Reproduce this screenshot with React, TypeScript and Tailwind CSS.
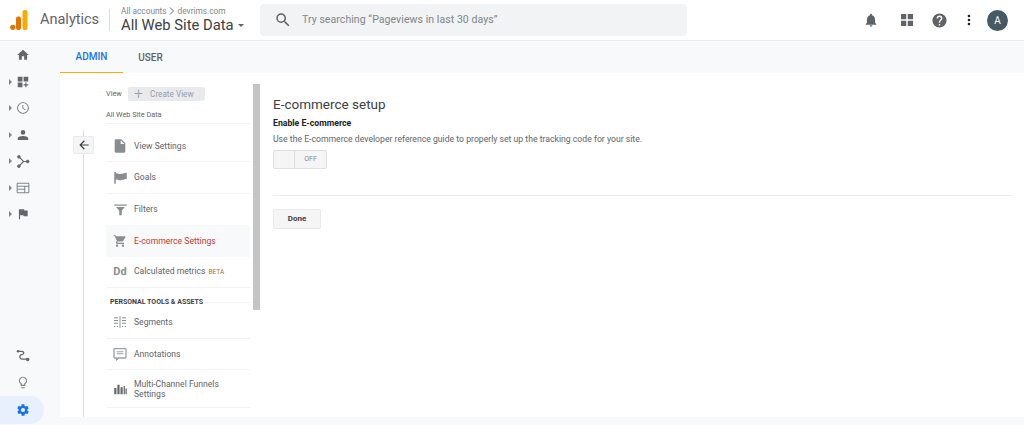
import React from 'react';

// Material icon helper, all icons are on a 24 grid
const Icon = ({ d, size = 16, className = '' }: { d: string; size?: number; className?: string }) => (
  <svg width={size} height={size} viewBox="0 0 24 24" className={className} fill="currentColor">
    <path d={d} />
  </svg>
);

const paths = {
  home: 'M10 20v-6h4v6h5v-8h3L12 3 2 12h3v8z',
  dash: 'M3 3h8v8H3zM13 3h8v8h-8zM3 13h8v8H3zM16 13h2v3h3v2h-3v3h-2v-3h-3v-2h3z',
  clock: 'M12 2a10 10 0 1 0 0 20 10 10 0 0 0 0-20zm0 18.500a8.500 8.500 0 1 1 0-17 8.500 8.500 0 0 1 0 17zM12.500 7H11.200v6l5 3 .6-1-4.300-2.600z',
  person: 'M12 11.500a4 4 0 1 0 0-8 4 4 0 0 0 0 8zm0 2c-3 0-9 1.300-9 4v3h18v-3c0-2.700-6-4-9-4z',
  flag: 'M14.400 6L14 4H5v17h2v-7h5.600l.4 2h7V6z',
  bulb: 'M9 21c0 .6.400 1 1 1h4c.6 0 1-.4 1-1v-1H9zm3-19a7 7 0 0 0-4 12.700V17c0 .6.400 1 1 1h6c.6 0 1-.4 1-1v-2.300A7 7 0 0 0 12 2zm2.900 11.100l-.9.600V16h-4v-2.300l-.9-.6a5 5 0 1 1 5.800 0z',
  gear: 'M19.400 13c0-.3.100-.6.100-1s0-.7-.1-1l2.100-1.600c.2-.2.200-.4.100-.6l-2-3.500c-.1-.2-.4-.3-.6-.2l-2.500 1c-.5-.4-1.100-.7-1.700-1l-.4-2.600c0-.3-.2-.5-.4-.5h-4c-.3 0-.5.200-.5.400l-.4 2.700c-.6.200-1.100.6-1.700 1l-2.400-1c-.3-.1-.5 0-.7.200l-2 3.500c-.1.200 0 .4.200.6L4.600 11c0 .3-.1.600-.1 1s0 .7.100 1l-2.100 1.600c-.2.200-.2.400-.1.600l2 3.500c.1.200.4.300.6.200l2.500-1c.5.400 1.100.7 1.700 1l.4 2.600c0 .2.200.4.500.4h4c.3 0 .5-.2.500-.4l.4-2.600c.6-.3 1.200-.6 1.700-1l2.500 1c.2.100.5 0 .6-.2l2-3.500c.1-.2.100-.5-.1-.6zM12 15.500a3.500 3.500 0 1 1 0-7 3.500 3.500 0 0 1 0 7z',
  search: 'M15.500 14h-.79l-.28-.27A6.470 6.470 0 0 0 16 9.500 6.500 6.500 0 1 0 9.500 16c1.610 0 3.090-.59 4.230-1.570l.27.280v.79l5 4.990L20.490 19l-4.990-5zm-6 0C7.010 14 5 11.990 5 9.500S7.010 5 9.500 5 14 7.010 14 9.500 11.990 14 9.500 14z',
  bell: 'M12 22a2 2 0 0 0 2-2h-4a2 2 0 0 0 2 2zm6-6v-5c0-3.100-1.600-5.600-4.500-6.300V4a1.500 1.500 0 0 0-3 0v.7C7.600 5.400 6 7.900 6 11v5l-2 2v1h16v-1z',
  apps: 'M4 4h7v7H4zM13 4h7v7h-7zM4 13h7v7H4zM13 13h7v7h-7z',
  help: 'M12 2a10 10 0 1 0 0 20 10 10 0 0 0 0-20zm1 17h-2v-2h2zm2.100-7.700l-.9.900c-.8.700-1.200 1.300-1.200 2.800h-2v-.5c0-1.100.4-2.100 1.200-2.800l1.200-1.300c.4-.3.600-.8.600-1.400a2 2 0 0 0-4 0H8a4 4 0 0 1 8 0c0 .9-.4 1.700-.9 2.300z',
  more: 'M12 8a2 2 0 1 0 0-4 2 2 0 0 0 0 4zm0 2a2 2 0 1 0 0 4 2 2 0 0 0 0-4zm0 6a2 2 0 1 0 0 4 2 2 0 0 0 0-4z',
  back: 'M20 11H7.800l5.600-5.600L12 4l-8 8 8 8 1.400-1.400L7.800 13H20z',
  file: 'M6 2a2 2 0 0 0-2 2v16a2 2 0 0 0 2 2h12a2 2 0 0 0 2-2V8l-6-6zm7 7V3.500L18.500 9z',
  goal: 'M2 3h2.500v19H2zM4.500 5c3 0 4.500 1.200 7.500 1.200S18 5 22 4.500v10c-4 .5-7 1.700-10 1.700s-4.500-1.200-7.500-1.200z',
  filter: 'M2 4h20v2H2zM5 8h14l-5 6v7h-4v-7z',
  cart: 'M7 18a2 2 0 1 0 0 4 2 2 0 0 0 0-4zM1 2v2h2l3.600 7.600L5.200 14c-.1.300-.2.600-.2 1 0 1.100.9 2 2 2h12v-2H7.400a.2.200 0 0 1-.2-.2l.9-1.800h7.400c.8 0 1.400-.4 1.800-1L21.300 5.500c.1-.1.200-.3.200-.5 0-.6-.4-1-1-1H5.200l-.9-2zm16 16a2 2 0 1 0 0 4 2 2 0 0 0 0-4z',
  segments: 'M11.300 3h1.400v18h-1.400zM3 5h6v1.500H3zM3 9h6v1.500H3zM3 13h6v1.500H3zM3 18h2v1.500H3zM7 18h2v1.500H7zM15 5h6v1.500h-6zM15 9h6v1.500h-6zM15 13h6v1.500h-6zM15 18h2v1.500h-2zM19 18h2v1.500h-2z',
  comment: 'M20 3H4a2 2 0 0 0-2 2v12a2 2 0 0 0 2 2h2v4l4-4h10a2 2 0 0 0 2-2V5a2 2 0 0 0-2-2zm0 14H9.200L8 18.200V17H4V5h16zM7 8h10v1.500H7zM7 11h10v1.500H7z',
  bars: 'M2 11h3.500v10H2zM7 6h3.500v15H7zM12 10h3.500v11H12zM17 8h2v13h-2zM20 12h2v9h-2z',
};

// Drawn with strokes, no filled Material glyph looks like these
const BranchIcon = () => (
  <svg width="15" height="15" viewBox="0 0 24 24" fill="currentColor" stroke="currentColor">
    <path d="M5 4l8 8H21M13 12l-8 8" fill="none" strokeWidth="2" />
    <circle cx="5" cy="4" r="2.500" />
    <circle cx="5" cy="20" r="2.500" />
    <circle cx="20" cy="12" r="2.500" />
  </svg>
);

const WebIcon = () => (
  <svg width="16" height="16" viewBox="0 0 24 24" fill="none" stroke="#80868b" strokeWidth="1.800">
    <rect x="2" y="4" width="20" height="16" rx="1" />
    <path d="M2 9h20M15 9v11M2 14h13" />
  </svg>
);

const RouteIcon = () => (
  <svg width="14" height="14" viewBox="0 0 24 24" fill="none" stroke="currentColor" strokeWidth="2.200">
    <path d="M3 4h7c3 0 3.500 2 3 4s-5 1.500-6 3.500S7 17 10 17.500h9" />
    <circle cx="3.500" cy="4" r="2.200" fill="currentColor" stroke="none" />
    <circle cx="20" cy="18" r="3" fill="currentColor" stroke="none" />
  </svg>
);

const Caret = () => (
  <span className="w-0 h-0 border-y-[3px] border-y-transparent border-l-[3px] border-l-[#80868b]" />
);

const RailItem = ({ children, caret = false }: { children: React.ReactNode; caret?: boolean }) => (
  <div className="h-[26.500px] flex items-center text-[#63676b]">
    <div className="w-[15.500px] flex justify-end pr-[4px]">{caret && <Caret />}</div>
    <div className="w-[14px] flex justify-center">{children}</div>
  </div>
);

const NavRow = ({
  icon,
  label,
  active = false,
  badge,
  tall = false,
  last = false,
}: {
  icon: React.ReactNode;
  label: React.ReactNode;
  active?: boolean;
  badge?: string;
  tall?: boolean;
  last?: boolean;
}) => (
  <div
    className={`flex items-center ${tall ? 'h-[38px]' : 'h-[31.500px]'} ${last ? '' : 'border-b border-[#f1f3f4]'} ${
      active ? 'bg-[#f8f9fa]' : ''
    }`}
  >
    <div className="w-[28px] flex justify-center text-[#8a8d90] shrink-0">{icon}</div>
    <span className={`text-[8.600px] leading-[10px] ${active ? 'text-[#c5392f]' : 'text-[#5f6368]'}`}>
      {label}
      {badge && <span className="text-[6.500px] text-[#b26a2c] ml-[3px]">{badge}</span>}
    </span>
  </div>
);

export default function App() {
  return (
    <div
      className="w-[1024px] h-[425px] overflow-hidden flex flex-col bg-[#f8f9fa]"
      style={{ fontFamily: 'Roboto, sans-serif' }}
    >
      {/* Top bar */}
      <header className="h-[41px] shrink-0 bg-white border-b border-[#e8eaed] flex items-center">
        <svg width="18" height="20" viewBox="0 0 18 20" className="ml-[10px]">
          <rect x="12.500" y="0" width="5" height="20" rx="2" fill="#f9ab00" />
          <rect x="6" y="6.500" width="5" height="13.500" rx="2" fill="#e37400" />
          <circle cx="2.800" cy="17.300" r="2.600" fill="#e37400" />
        </svg>
        <span className="ml-[12px] text-[14.500px] text-[#5f6368] w-[60px]">Analytics</span>
        <div className="ml-[9px] w-px h-[22px] bg-[#dadce0]" />
        <div className="ml-[11px] w-[139px] flex flex-col">
          <div className="text-[8.300px] leading-[10px] text-[#80868b] flex items-center">
            All accounts
            <svg width="6" height="8" viewBox="0 0 6 8" className="mx-[2.500px]">
              <path d="M1 .5L4.500 4 1 7.500" fill="none" stroke="#5f6368" strokeWidth="1" />
            </svg>
            devrims.com
          </div>
          <div className="text-[14.800px] leading-[18px] text-[#3c4043] flex items-center whitespace-nowrap">
            All Web Site Data
            <span className="ml-[4px] mt-[1px] w-0 h-0 border-x-[3.500px] border-x-transparent border-t-[3.500px] border-t-[#5f6368]" />
          </div>
        </div>
        <div className="w-[427px] h-[32px] bg-[#f1f3f4] rounded-[4px] flex items-center">
          <Icon d={paths.search} size={18} className="ml-[14px] text-[#5f6368]" />
          <span className="ml-[10px] text-[10.500px] tracking-[0.070px] text-[#80868b] whitespace-nowrap">
            Try searching “Pageviews in last 30 days”
          </span>
        </div>
        <div className="flex-1 flex items-center justify-end text-[#5f6368]">
          <Icon d={paths.bell} size={16} />
          <Icon d={paths.apps} size={18} className="ml-[19px]" />
          <Icon d={paths.help} size={17} className="ml-[15px]" />
          <Icon d={paths.more} size={16} className="ml-[13px] text-[#202124]" />
          <div className="ml-[10px] mr-[16px] w-[21px] h-[21px] rounded-full bg-[#455a64] text-white text-[10px] flex items-center justify-center">
            A
          </div>
        </div>
      </header>

      <div className="flex-1 flex min-h-0">
        {/* Left rail */}
        <aside className="w-[60px] shrink-0 flex flex-col justify-between">
          <div className="pt-[1px]">
            <RailItem><Icon d={paths.home} size={14} /></RailItem>
            <RailItem caret><Icon d={paths.dash} size={14} /></RailItem>
            <RailItem caret><Icon d={paths.clock} size={14} /></RailItem>
            <RailItem caret><Icon d={paths.person} size={14} /></RailItem>
            <RailItem caret><BranchIcon /></RailItem>
            <RailItem caret><WebIcon /></RailItem>
            <RailItem caret><Icon d={paths.flag} size={14} /></RailItem>
          </div>
          <div className="pb-[1px]">
            <RailItem><RouteIcon /></RailItem>
            <RailItem><Icon d={paths.bulb} size={15} className="text-[#7d8083]" /></RailItem>
            <div className="h-[28px] w-[44px] rounded-r-full bg-[#e8f0fe] flex items-center text-[#1a73e8]">
              <div className="w-[15.500px]" />
              <div className="w-[14px] flex justify-center">
                <Icon d={paths.gear} size={14} />
              </div>
            </div>
          </div>
        </aside>

        <main className="flex-1 flex flex-col min-w-0">
          {/* Tabs */}
          <div className="h-[32px] shrink-0 flex text-[10px] font-medium">
            <div className="w-[63px] flex items-center justify-center text-[#1a73e8] border-b-[1.500px] border-[#f9ab00]">
              ADMIN
            </div>
            <div className="w-[55px] flex items-center justify-center text-[#5f6368]">USER</div>
          </div>

          <div className="h-[344px] shrink-0 bg-white flex">
            {/* Back rail */}
            <div className="w-[46px] shrink-0 flex flex-col items-center pt-[58px] pl-[1px]">
              <div className="w-px h-[5px] bg-[#dadce0]" />
              <div className="w-[21px] h-[18px] bg-[#f5f5f5] border border-[#e8eaed] rounded-[2px] flex items-center justify-center text-[#3c4043]">
                <Icon d={paths.back} size={14} />
              </div>
              <div className="w-px flex-1 bg-[#dadce0]" />
            </div>

            {/* Nav column */}
            <nav className="w-[144px] shrink-0 flex flex-col">
              <div className="h-[50.500px] border-b border-[#f1f3f4] shrink-0">
                <div className="flex items-center pt-[14px]">
                  <span className="text-[7.300px] text-[#5f6368] w-[22px]">View</span>
                  <div className="w-[77px] h-[14px] rounded-[2px] bg-[#e8eaed] flex items-center text-[8.200px] text-[#9aa0a6]">
                    <span className="ml-[6px] mr-[7px] text-[16px] leading-[12px] font-light">+</span>
                    Create View
                  </div>
                </div>
                <div className="mt-[9px] text-[7.300px] leading-[10px] text-[#5f6368]">All Web Site Data</div>
              </div>
              <div className="h-[7px] shrink-0" />
              <NavRow icon={<Icon d={paths.file} size={16} />} label="View Settings" />
              <NavRow icon={<Icon d={paths.goal} size={15} />} label="Goals" />
              <NavRow icon={<Icon d={paths.filter} size={15} />} label="Filters" last />
              <NavRow icon={<Icon d={paths.cart} size={14} />} label="E-commerce Settings" active last />
              <NavRow
                icon={<span className="text-[11px] font-bold text-[#8a8d90]">Dd</span>}
                label="Calculated metrics"
                badge="BETA"
              />
              <div className="h-[19px] shrink-0 pl-[4px] pt-[9px] flex items-center gap-[1px] text-[7px] leading-[8px] font-bold text-[#3c4043] whitespace-nowrap">
                PERSONAL TOOLS &amp; ASSETS
                <div className="flex-1 h-px bg-[#f1f3f4]" />
              </div>
              <NavRow icon={<Icon d={paths.segments} size={16} />} label="Segments" />
              <NavRow icon={<Icon d={paths.comment} size={16} className="text-[#9ea1a4]" />} label="Annotations" />
              <NavRow icon={<Icon d={paths.bars} size={15} className="text-[#63676b]" />} label={<>Multi-Channel Funnels<br />Settings</>} tall />
            </nav>

            {/* Scroll thumb */}
            <div className="ml-[3px] mt-[11px] w-[7px] h-[226px] bg-[#c4c4c4] shrink-0" />

            {/* Content */}
            <section className="ml-[13px] mr-[12px] flex-1 min-w-0 pt-[23px]">
              <h1 className="text-[13.500px] leading-[17px] text-[#3c4043]">E-commerce setup</h1>
              <div className="mt-[4px] text-[8.700px] leading-[12px] font-bold text-[#202124]">Enable E-commerce</div>
              <p className="mt-[4px] text-[8.670px] leading-[12px] text-[#5f6368]">
                Use the E-commerce developer reference guide to properly set up the tracking code for your site.
              </p>
              <div className="mt-[5px] w-[54px] h-[19px] flex border border-[#e0e0e0] rounded-[2px] bg-[#f5f5f5]">
                <div className="w-[21px] border-r border-[#dadce0]" />
                <div className="flex-1 flex items-center justify-center text-[7px] text-[#80868b]">OFF</div>
              </div>
              <div className="mt-[26px] h-px bg-[#eeeeee]" />
              <div className="mt-[13px] w-[48px] h-[20px] flex items-center justify-center bg-[#f5f5f5] border border-[#e8eaed] rounded-[2px] text-[8px] font-bold text-[#3c4043]">
                Done
              </div>
            </section>
          </div>
        </main>
      </div>
    </div>
  );
}
